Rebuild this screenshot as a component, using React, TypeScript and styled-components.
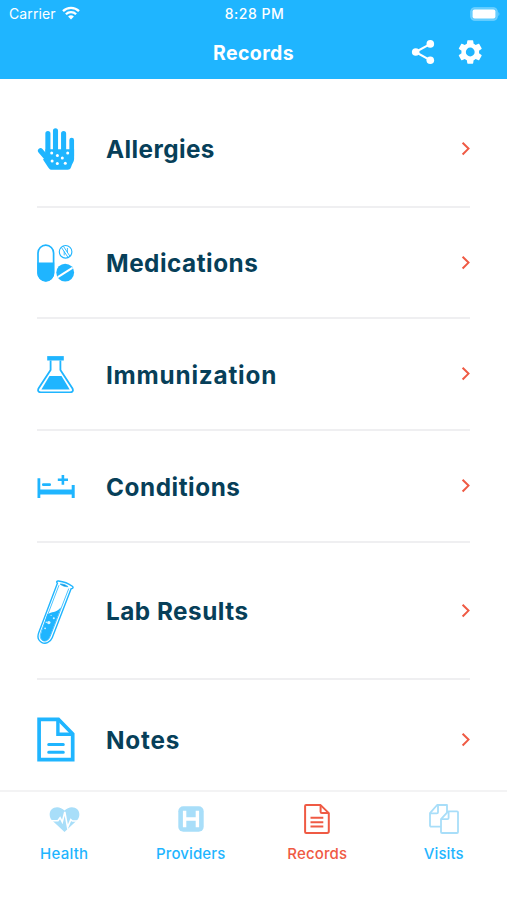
import React from "react";
import styled, { createGlobalStyle } from "styled-components";

const BLUE = "#1fb5ff";
const NAVY = "#073f59";
const RED = "#ef5a44";
const PALE = "#a8def9";

const GlobalStyle = createGlobalStyle`
  * { box-sizing: border-box; }
  body { margin: 0; background: #fff; font-family: "Inter", "Liberation Sans", sans-serif; }
  svg { display: block; }
`;

const Screen = styled.div`
  display: flex;
  flex-direction: column;
  width: 507px;
  height: 900px;
  overflow: hidden;
  background: #fff;
`;

const Header = styled.header`
  flex: none;
  height: 79px;
  color: #fff;
  background: ${BLUE};
`;

const StatusBar = styled.div`
  display: grid;
  grid-template-columns: 1fr auto 1fr;
  align-items: center;
  height: 27px;
  padding: 0 7px 0 9px;
  font-size: 14px;
  line-height: 28px;
`;

const Carrier = styled.div`
  display: flex;
  align-items: center;
  gap: 6px;
  letter-spacing: 0.1px;

  svg { margin-bottom: 2px; }
`;

const Clock = styled.div`
  font-weight: 500;
  letter-spacing: 0.5px;
`;

const BatterySlot = styled.div`
  justify-self: end;
  padding-bottom: 1px;
`;

const TitleBar = styled.div`
  display: grid;
  grid-template-columns: 1fr auto 1fr;
  align-items: center;
  height: 51px;
  padding: 0 24px;
`;

const Title = styled.h1`
  grid-column: 2;
  margin: 0;
  padding-top: 1px;
  font-size: 19.5px;
  line-height: 50px;
  font-weight: 700;
  letter-spacing: 0.4px;
`;

const Actions = styled.div`
  display: flex;
  justify-content: flex-end;
  align-items: center;
  gap: 22px;
  padding-bottom: 2px;
`;

const List = styled.main`
  flex: 1;
  min-height: 0;
  overflow: hidden;
  padding: 12px 37px 0;
`;

const Row = styled.div<{ $height: number }>`
  display: grid;
  grid-template-columns: 69px 1fr 9px;
  align-items: center;
  height: ${(p) => p.$height}px;
  border-bottom: 2px solid #efeff1;
`;

const RowLabel = styled.div<{ $track: number }>`
  padding-top: 1px;
  color: ${NAVY};
  font-size: 24.3px;
  line-height: 32px;
  font-weight: 700;
  letter-spacing: ${(p) => p.$track}px;
  white-space: nowrap;
`;

const TabBar = styled.nav`
  flex: none;
  display: grid;
  grid-template-columns: repeat(4, 126.5px);
  height: 110px;
  padding-left: 1px;
  border-top: 2px solid #f3f3f4;
  background: #fff;
`;

const Tab = styled.div<{ $active?: boolean }>`
  display: flex;
  flex-direction: column;
  align-items: center;
  padding-top: 10px;
  color: ${(p) => (p.$active ? RED : BLUE)};
`;

const TabIcon = styled.div`
  display: flex;
  align-items: center;
  justify-content: center;
  height: 34px;
`;

const TabLabel = styled.div<{ $track: number }>`
  margin-top: 8px;
  font-size: 15px;
  line-height: 20px;
  font-weight: 500;
  letter-spacing: ${(p) => p.$track}px;
`;

const Wifi = () => (
  <svg width="18" height="14" viewBox="0 0 18 14" fill="none" stroke="#fff" strokeWidth="2.3">
    <path d="M1 5.1a11.4 11.4 0 0 1 16 0" />
    <path d="M3.9 8.2a7.2 7.2 0 0 1 10.2 0" />
    <path d="M9 13.6 6.1 10.6a4.2 4.2 0 0 1 5.8 0z" fill="#fff" stroke="none" />
  </svg>
);

const Battery = () => (
  <svg width="30" height="14" viewBox="0 0 30 14">
    <rect x="0.8" y="0.8" width="26.4" height="12.4" rx="3.8" fill="#62ccff" stroke="#74d2ff" strokeWidth="1.1" />
    <rect x="2.6" y="2.6" width="22.8" height="8.8" rx="2" fill="#fff" />
    <path d="M28.4 5v4c1.3-.6 1.3-3.4 0-4z" fill="#74d2ff" />
  </svg>
);

const Share = () => (
  <svg width="24" height="26" viewBox="0 0 24 26" fill="#fff">
    <path d="M19.5 4.8 4.5 13l15 8.4" fill="none" stroke="#fff" strokeWidth="2.1" />
    <circle cx="19.3" cy="4.9" r="3.8" />
    <circle cx="4.7" cy="13" r="3.8" />
    <circle cx="19.3" cy="21.3" r="3.8" />
  </svg>
);

const Gear = () => (
  <svg width="26" height="26" viewBox="1.2 1.4 21.2 21.2" fill="#fff">
    <path d="M19.14 12.94c.04-.3.06-.61.06-.94s-.02-.64-.07-.94l2.03-1.58c.18-.14.23-.41.12-.61l-1.92-3.32c-.12-.22-.37-.29-.59-.22l-2.39.96c-.5-.38-1.03-.7-1.62-.94l-.36-2.54c-.04-.24-.24-.41-.48-.41h-3.84c-.24 0-.43.17-.47.41l-.36 2.54c-.59.24-1.13.57-1.62.94l-2.39-.96c-.22-.08-.47 0-.59.22L2.74 8.87c-.12.21-.08.47.12.61l2.03 1.58c-.05.3-.09.63-.09.94s.02.64.07.94l-2.03 1.58c-.18.14-.23.41-.12.61l1.92 3.32c.12.22.37.29.59.22l2.39-.96c.5.38 1.03.7 1.62.94l.36 2.54c.05.24.24.41.48.41h3.84c.24 0 .44-.17.47-.41l.36-2.54c.59-.24 1.13-.56 1.62-.94l2.39.96c.22.08.47 0 .59-.22l1.92-3.32c.12-.22.07-.47-.12-.61l-2.01-1.58zM12 15.6A3.6 3.6 0 1 1 12 8.4a3.6 3.6 0 0 1 0 7.2z" />
  </svg>
);

const Chevron = () => (
  <svg width="9" height="14" viewBox="0 0 9 14" fill="none" stroke={RED} strokeWidth="2">
    <path d="M1.6 .7 7.5 6.6 1.6 12.5" />
  </svg>
);

const Hand = () => (
  <svg width="38" height="42" viewBox="0 0 38 42">
    <g stroke={BLUE} strokeLinecap="round" strokeWidth="5.1" fill="none">
      <path d="M10.9 5.5V25M18.5 2.9V25M26.6 5.5V25" />
      <path d="M34.7 12v16" strokeWidth="4.7" />
      <path d="M3.5 22.7 11 31.5" strokeWidth="5.2" />
    </g>
    <path d="M8.4 21.2h28.7V31c0 2.8-2.1 4.7-2.8 7.5-.5 2-1.6 3.3-3.8 3.3H15.2c-2 0-3.1-.9-4.1-2.6L6 31.4l2.4-2z" fill={BLUE} />
    <g fill="#fff">
      <circle cx="14.7" cy="25.1" r="1.5" />
      <circle cx="20.4" cy="27.5" r="1.5" />
      <circle cx="30.7" cy="24.9" r="1.5" />
      <circle cx="25.3" cy="30" r="1.5" />
      <circle cx="15.1" cy="33" r="1.5" />
      <circle cx="20.3" cy="35.5" r="1.5" />
      <circle cx="28.3" cy="35.2" r="1.5" />
    </g>
  </svg>
);

const Pills = () => (
  <svg width="38" height="38" viewBox="0 0 38 38">
    <rect x="1" y="1.2" width="15.6" height="35.6" rx="7.8" fill="#fff" stroke={BLUE} strokeWidth="1.7" />
    <path d="M.4 18.5h16.8v10.6a8.4 8.4 0 0 1-16.8 0z" fill={BLUE} />
    <circle cx="28.6" cy="7.8" r="6.3" fill="#fff" stroke={BLUE} strokeWidth="1.1" />
    <path d="m24.4 3.4 6.6 10M26.4 2.2l6.4 9.8M27.2 7.4v4M30.4 4v4.4" stroke={BLUE} strokeWidth=".9" />
    <circle cx="28.2" cy="28.6" r="8.9" fill={BLUE} />
    <path d="m20.8 33.1 14.6-9.2" stroke="#fff" strokeWidth="2" />
  </svg>
);

const Flask = () => (
  <svg width="38" height="38" viewBox="0 -0.7 38 38">
    <path d="M10.2.4h16.6v4.4H10.2z" fill={BLUE} />
    <path d="M13.6 4.8v9.4L1.8 32.4c-1.5 2.4-.5 4.2 2.2 4.2h29c2.7 0 3.7-1.8 2.2-4.2L23.4 14.2V4.8" fill="none" stroke={BLUE} strokeWidth="1.8" />
    <path d="M12.5 20.4h12l8.2 13.3H4.4z" fill={BLUE} />
  </svg>
);

const Bed = () => (
  <svg width="38" height="26" viewBox="0 -0.8 38 26" fill={BLUE}>
    <path d="M.5 4.4h2.8v11.2h31.4v-4.4h3v13h-3v-3.4H3.3v3.4H.5z" />
    <rect x="5" y="9.5" width="9" height="2.7" rx="1.2" />
    <path d="M24.6 1.2h2.6v3.5h3.8v2.6h-3.8v3.6h-2.6V7.3h-3.8V4.7h3.8z" />
  </svg>
);

const Tube = () => (
  <svg width="38" height="66" viewBox="0 -1.5 38 66" fill="none" stroke={BLUE}>
    <path d="M20.4 3.7c-1.3-1.1-.7-2.4 1.1-2.2 5 .6 10.2 2.6 13.8 5.3 1.4 1.2.6 2.6-1.2 2.5L15.2 58.3c-2 5-7 6.6-10.7 4.5-3.4-2-4.4-5.5-2.6-10z" strokeWidth="1.4" />
    <path d="m22 5.7-18 47c-1.6 4.1-.6 7.1 1.7 8.3 2.8 1.5 5.7.1 7.4-3.9L31.8 9" strokeWidth=".8" />
    <path d="M10.2 34.8c4.8-3 8.6-1.4 12.8-6.1l1-.7L12.9 57c-1.7 4.4-5.1 5.2-7.2 3.9-2.3-1.4-2.7-4.2-1.3-7.9z" fill={BLUE} stroke="none" />
    <path d="M23 4.5c2.5-.4 6.2.9 8.1 2.7-2.5.3-6.2-.9-8.1-2.7z" fill="#168ccb" strokeWidth=".7" />
    <g fill="#d9f4ff" stroke="none">
      <circle cx="11.8" cy="43.1" r="1.7" />
      <circle cx="9.3" cy="42.8" r=".8" />
      <circle cx="16.8" cy="38.8" r="1" />
      <circle cx="14.1" cy="35.8" r=".6" />
      <circle cx="8.1" cy="48.8" r=".9" />
    </g>
  </svg>
);

const Note = () => (
  <svg width="38" height="45" viewBox="0 0 38 45" fill="none" stroke={BLUE}>
    <path d="M2.1 2.3h19.3L35.7 17v25.6H2.1z" strokeWidth="3.7" />
    <path d="M20.9 2.5v14.8h15" strokeWidth="3.4" />
    <path d="M11.7 27.4h14.6M11.7 35.2h14.6" strokeWidth="3" strokeLinecap="round" />
  </svg>
);

const Heart = () => (
  <svg width="31" height="27" viewBox="0 0 31 27">
    <path d="M15.5 26 3.2 14.5C.1 11.6-.2 6.5 2.5 3.6 5.9-.1 11.8.5 15.5 4.6 19.2.5 25.1-.1 28.5 3.6c2.7 2.9 2.4 8-.7 10.9z" fill={PALE} />
    <path d="M1.2 14.8h7.7l2.2-3.1 2.2 4.2 2.5-10 2.8 15.5 3.2-7.8 1.6 1.4h6.4" fill="none" stroke="#fff" strokeWidth="1.6" />
  </svg>
);

const Hospital = () => (
  <svg width="26" height="26" viewBox="0 0 26 26">
    <rect x=".3" y=".3" width="25.4" height="25.4" rx="5" fill={PALE} />
    <path d="M6.6 4.7v16.6M19.4 4.7v16.6M6.6 13h12.8" stroke="#fff" strokeWidth="3.4" />
  </svg>
);

const RecordIcon = () => (
  <svg width="26" height="30" viewBox="0 0 26 30" fill="none" stroke={RED} strokeWidth="2" strokeLinejoin="round">
    <path d="M2.1 1.1h14.5l8.2 8v18.2c0 .9-.7 1.6-1.6 1.6H2.1c-.6 0-1-.4-1-1V2.1c0-.6.4-1 1-1z" />
    <path d="M16.6 1.1v6.6c0 1 .4 1.4 1.4 1.4h6.8" />
    <path d="M6.5 13.8h12.8M6.5 18.2h12.8M6.5 22.6h12.8" />
  </svg>
);

const Visits = () => (
  <svg width="30" height="30" viewBox="0 0 30 30" fill="#fff" stroke={PALE} strokeWidth="1.8" strokeLinejoin="round">
    <path d="M8.1 1H18v21.7H2.1c-.6 0-1.1-.4-1.1-1.1V9.2z" />
    <path d="M9 1v7.2c0 .8-.4 1.2-1.2 1.2H1" fill="none" />
    <path d="M19.2 7.3H28c.6 0 1 .4 1 1V28c0 .6-.4 1-1 1H13.1c-.6 0-1.1-.4-1.1-1V15.1z" />
    <path d="M19.6 7.5v6.4c0 .8-.4 1.2-1.2 1.2H12" fill="none" />
  </svg>
);

const records = [
  { label: "Allergies", icon: <Hand />, height: 117, track: 0.42 },
  { label: "Medications", icon: <Pills />, height: 111, track: 0.5 },
  { label: "Immunization", icon: <Flask />, height: 112, track: 0.8 },
  { label: "Conditions", icon: <Bed />, height: 112, track: 0.55 },
  { label: "Lab Results", icon: <Tube />, height: 137, track: 0.5 },
  { label: "Notes", icon: <Note />, height: 121, track: 0.8 },
];

const tabs = [
  { label: "Health", icon: <Heart />, track: 0.25 },
  { label: "Providers", icon: <Hospital />, track: 0.12 },
  { label: "Records", icon: <RecordIcon />, track: 0.14, active: true },
  { label: "Visits", icon: <Visits />, track: 0.08 },
];

export default function App() {
  return (
    <Screen>
      <GlobalStyle />
      <Header>
        <StatusBar>
          <Carrier>
            <span>Carrier</span>
            <Wifi />
          </Carrier>
          <Clock>8:28 PM</Clock>
          <BatterySlot>
            <Battery />
          </BatterySlot>
        </StatusBar>
        <TitleBar>
          <Title>Records</Title>
          <Actions>
            <Share />
            <Gear />
          </Actions>
        </TitleBar>
      </Header>
      <List>
        {records.map((r) => (
          <Row key={r.label} $height={r.height}>
            {r.icon}
            <RowLabel $track={r.track}>{r.label}</RowLabel>
            <Chevron />
          </Row>
        ))}
      </List>
      <TabBar>
        {tabs.map((t) => (
          <Tab key={t.label} $active={t.active}>
            <TabIcon>{t.icon}</TabIcon>
            <TabLabel $track={t.track}>{t.label}</TabLabel>
          </Tab>
        ))}
      </TabBar>
    </Screen>
  );
}
